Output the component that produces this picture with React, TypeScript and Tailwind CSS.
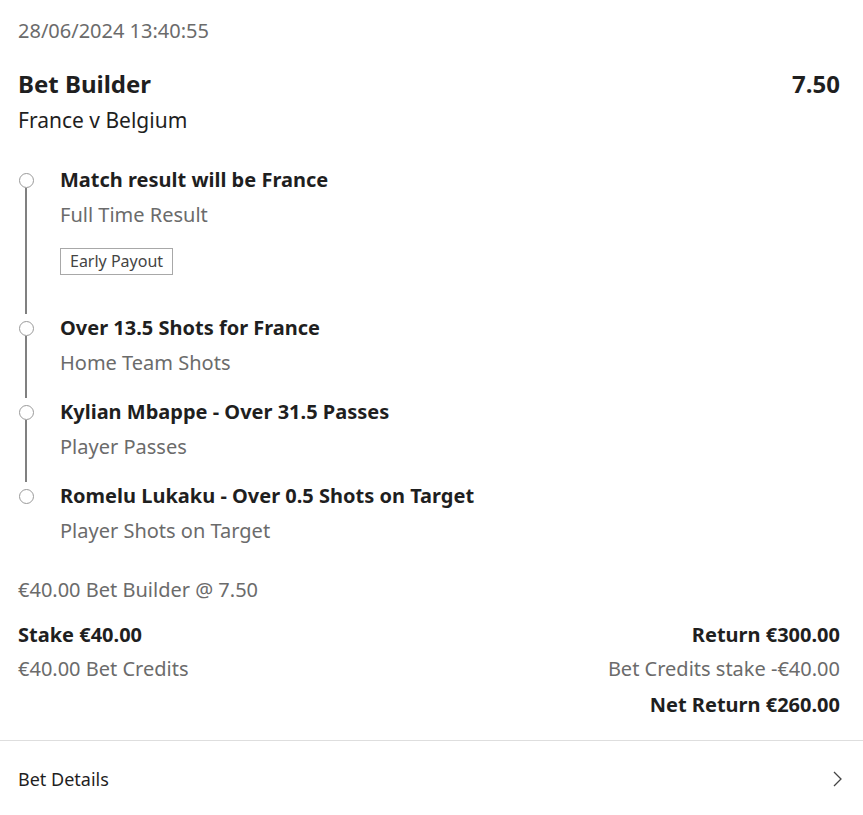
const legs = [
  { title: "Match result will be France", market: "Full Time Result", badge: "Early Payout" },
  { title: "Over 13.5 Shots for France", market: "Home Team Shots" },
  { title: "Kylian Mbappe - Over 31.5 Passes", market: "Player Passes" },
  { title: "Romelu Lukaku - Over 0.5 Shots on Target", market: "Player Shots on Target" },
];

function Leg({ leg, last }: { leg: (typeof legs)[number]; last: boolean }) {
  return (
    <div className="flex">
      {/* timeline column */}
      <div className="mr-[26px] flex w-[16px] shrink-0 flex-col items-center">
        <div className="mt-[7px] h-[15px] w-[15px] shrink-0 rounded-full border border-[#9a9a9a] bg-white" />
        {!last && <div className="w-[2px] flex-1 bg-[#808080]" />}
      </div>
      <div className={last ? "flex-1" : "flex-1 pb-[21px]"}>
        <div className="text-[20px] font-bold leading-7 text-[#1f1f1f]">{leg.title}</div>
        <div className="mt-[7px] text-[20px] leading-7 text-[#6b6b6b]">{leg.market}</div>
        {leg.badge && (
          <div className="mb-[18px] mt-[19px] inline-block border border-[#a8a8a8] px-[9px] text-[16px] leading-[25px] text-[#444]">
            {leg.badge}
          </div>
        )}
      </div>
    </div>
  );
}

export default function App() {
  return (
    <div className="min-h-[815px] bg-white font-['Noto_Sans',sans-serif]">
      <div className="px-[18px] pr-[23px] pb-[21px] pt-[17px]">
        <div className="text-[20px] leading-7 text-[#6b6b6b]">28/06/2024 13:40:55</div>

        <div className="mt-[23px] flex items-center justify-between">
          <h1 className="text-[24px] font-bold leading-8 text-[#1f1f1f]">Bet Builder</h1>
          <span className="text-[24px] font-bold leading-8 text-[#1f1f1f]">7.50</span>
        </div>
        <div className="mt-[6px] text-[21px] leading-7 text-[#1f1f1f]">France v Belgium</div>

        <div className="mt-[32px]">
          {legs.map((leg, i) => (
            <Leg key={leg.title} leg={leg} last={i === legs.length - 1} />
          ))}
        </div>

        <div className="mt-[31px] text-[20px] leading-7 text-[#6b6b6b]">€40.00 Bet Builder @ 7.50</div>

        <div className="mt-[17px] flex justify-between">
          <div className="flex flex-col gap-[6px]">
            <div className="text-[20px] font-bold leading-7 text-[#1f1f1f]">Stake €40.00</div>
            <div className="text-[20px] leading-7 text-[#6b6b6b]">€40.00 Bet Credits</div>
          </div>
          <div className="flex flex-col items-end">
            <div className="text-[20px] font-bold leading-7 text-[#1f1f1f]">Return €300.00</div>
            <div className="mt-[6px] text-[20px] leading-7 text-[#6b6b6b]">Bet Credits stake -€40.00</div>
            <div className="mt-[8px] text-[20px] font-bold leading-7 text-[#1f1f1f]">Net Return €260.00</div>
          </div>
        </div>
      </div>

      <div className="border-t border-[#dedede]">
        <button className="flex h-[76px] w-full items-center justify-between pl-[18px] pr-[21px] text-left">
          <span className="text-[18px] text-[#1f1f1f]">Bet Details</span>
          <svg width="10" height="16" viewBox="0 0 10 16" fill="none" stroke="#444" strokeWidth="1.3">
            <polyline points="2,1 9,8 2,15" />
          </svg>
        </button>
      </div>
    </div>
  );
}
